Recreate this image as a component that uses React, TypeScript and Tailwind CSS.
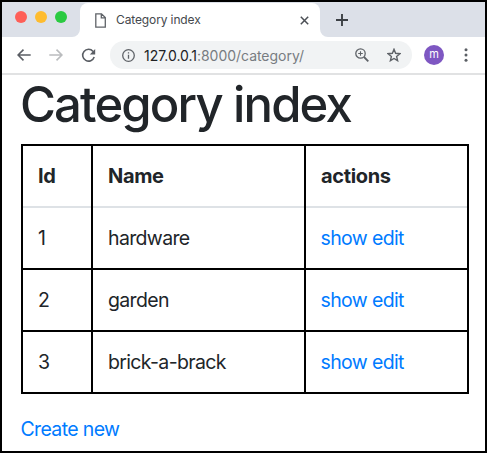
const rows = [
  { id: 1, name: "hardware" },
  { id: 2, name: "garden" },
  { id: 3, name: "brick-a-brack" },
];

function TabStrip() {
  return (
    <div className="flex h-[35px] bg-[#dce0e8]">
      <div className="flex w-[78px] gap-2 pt-[9px] pl-[13px]">
        <span className="size-3 rounded-full bg-[#fe5f58]" />
        <span className="size-3 rounded-full bg-[#febc2f]" />
        <span className="size-3 rounded-full bg-[#2aca41]" />
      </div>
      <div className="relative mt-px flex w-[240px] items-center rounded-t-lg bg-white pr-[11px] pl-[15px]">
        <svg className="absolute bottom-0 -left-2 size-2" viewBox="0 0 8 8">
          <path d="M8 0v8H0a8 8 0 0 0 8-8" fill="#fff" />
        </svg>
        <svg className="absolute -right-2 bottom-0 size-2" viewBox="0 0 8 8">
          <path d="M0 0v8h8a8 8 0 0 1-8-8" fill="#fff" />
        </svg>
        <svg className="h-[15px] w-[11px]" viewBox="0 0 11 15" fill="none" stroke="#5f6368" strokeWidth="1.3">
          <path d="M.8.8h5.7l3.8 3.8v9.6H.8zM6.3.8v4h4" />
        </svg>
        <span className="ml-[10px] text-[12px] font-[430] tracking-[-0.12px] whitespace-nowrap text-[#45484d]">
          Category index
        </span>
        <svg className="ml-auto size-[9px]" viewBox="0 0 9 9" stroke="#4b4f55" strokeWidth="1.5">
          <path d="M.8.8l7.4 7.4M8.2.8L.8 8.2" />
        </svg>
      </div>
      <svg className="mt-[12px] ml-[16px] size-3" viewBox="0 0 12 12" stroke="#3c4045" strokeWidth="1.9">
        <path d="M6 0v12M0 6h12" />
      </svg>
    </div>
  );
}

function Toolbar() {
  return (
    <div className="flex h-[38px] items-center border-b-2 border-[#e1e2e3] pl-[15px]">
      <svg className="h-3 w-[14px]" viewBox="0 0 14 12" fill="none" stroke="#5a5e64" strokeWidth="1.6">
        <path d="M13.7 6H1.3M6.5.6L1.1 6l5.4 5.4" />
      </svg>
      <svg className="ml-[18px] h-3 w-[14px]" viewBox="0 0 14 12" fill="none" stroke="#babcbe" strokeWidth="1.6">
        <path d="M.3 6h12.4M7.5.6L12.9 6l-5.4 5.4" />
      </svg>
      <svg className="ml-[18px] size-[15px]" viewBox="0 0 15 15" fill="none">
        <path d="M12.1 3.4A5.9 5.9 0 1 0 13.2 9" stroke="#5a5e64" strokeWidth="1.6" />
        <path d="M14.2 1v5.4H8.8z" fill="#5a5e64" />
      </svg>
      <div className="ml-[14px] flex h-7 w-[302px] items-center rounded-full bg-[#f1f3f4] pr-[11px] pl-[12px]">
        <svg className="size-[13px]" viewBox="0 0 13 13" fill="none" stroke="#5f6368" strokeWidth="1.3">
          <circle cx="6.5" cy="6.5" r="5.8" />
          <path d="M6.5 5.7v4M6.5 3.2v1.4" />
        </svg>
        <span className="ml-[9px] text-[14px] font-[430] tracking-[-0.03px] whitespace-nowrap text-[#202124]">
          127.0.0.1<span className="text-[#777c81]">:8000/category/</span>
        </span>
        <svg className="ml-auto size-[14px]" viewBox="0 0 14 14" fill="none" stroke="#5f6368" strokeWidth="1.3">
          <circle cx="5.5" cy="5.5" r="4.7" />
          <path d="M9 9l4.3 4.3" strokeWidth="1.8" />
          <path d="M5.5 3.2v4.6M3.2 5.5h4.6" strokeWidth="1.1" />
        </svg>
        <svg className="ml-[18px] size-[14px]" viewBox="0 0 14 14" fill="none" stroke="#5f6368" strokeWidth="1.4">
          <path d="M7 1.3l1.6 4 4.3.4-3.3 2.8 1 4.2L7 10.5l-3.6 2.2 1-4.2L1.1 5.7l4.3-.4z" />
        </svg>
      </div>
      <span className="ml-[12px] flex size-5 items-center justify-center rounded-full bg-[#7e57c2] pb-px text-[11px] text-white">
        m
      </span>
      <svg className="ml-[20px] h-[14px] w-[4px]" viewBox="0 0 4 14" fill="#5a5e64">
        <circle cx="2" cy="1.8" r="1.5" />
        <circle cx="2" cy="7" r="1.5" />
        <circle cx="2" cy="12.2" r="1.5" />
      </svg>
    </div>
  );
}

const columns = "grid grid-cols-[68px_211px_161px] gap-[2px]";
const cell = "flex h-[60px] items-center bg-white pl-[15px]";
const headCell = "flex h-[62px] items-center border-b-2 border-[#dee2e6] bg-white pl-[15px]";

export default function App() {
  return (
    <div className="h-[453px] w-[487px] overflow-hidden border-2 border-black bg-white font-['Inter','Liberation_Sans',sans-serif] text-[#212529]">
      <TabStrip />
      <Toolbar />
      <main className="px-[19px] text-[19.5px] leading-[30px] font-[430] tracking-[-0.65px]">
        <h1 className="mt-px mb-[11px] -ml-px text-[49px] leading-[57px] font-medium tracking-[-1.85px] whitespace-nowrap">
          Category index
        </h1>
        <div className="w-[448px] border-2 border-black bg-black">
          <div className={`${columns} text-[20px] font-bold tracking-[-0.35px]`}>
            <div className={headCell}>Id</div>
            <div className={headCell}>Name</div>
            <div className={headCell}>actions</div>
          </div>
          <div className={columns}>
            {rows.map((row) => (
              <div key={row.id} className="contents">
                <div className={cell}>{row.id}</div>
                <div className={cell}>{row.name}</div>
                <div className="flex h-[60px] items-center gap-[5px] bg-white pl-[14.5px] text-[#007bff]">
                  <a>show</a>
                  <a>edit</a>
                </div>
              </div>
            ))}
          </div>
        </div>
        <a className="mt-[20px] -ml-[0.5px] block text-[#007bff]">Create new</a>
      </main>
    </div>
  );
}
